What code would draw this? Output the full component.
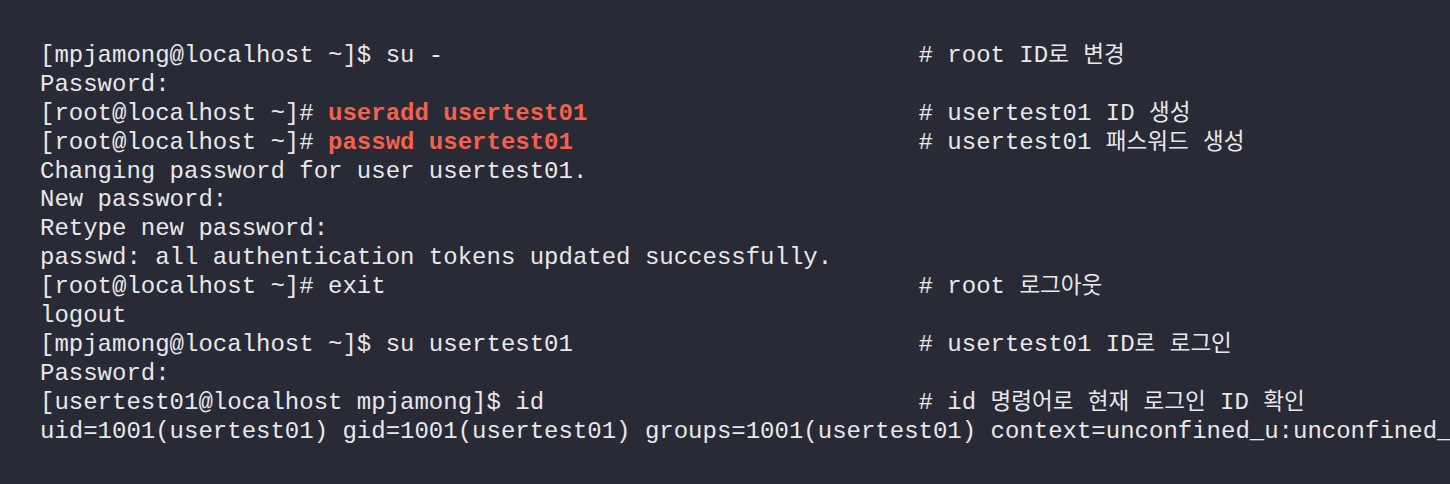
const lines: { text: string; cmd?: string; comment?: string }[] = [
  { text: "[mpjamong@localhost ~]$ su -", comment: "# root ID로 변경" },
  { text: "Password:" },
  { text: "[root@localhost ~]# ", cmd: "useradd usertest01", comment: "# usertest01 ID 생성" },
  { text: "[root@localhost ~]# ", cmd: "passwd usertest01", comment: "# usertest01 패스워드 생성" },
  { text: "Changing password for user usertest01." },
  { text: "New password:" },
  { text: "Retype new password:" },
  { text: "passwd: all authentication tokens updated successfully." },
  { text: "[root@localhost ~]# exit", comment: "# root 로그아웃" },
  { text: "logout" },
  { text: "[mpjamong@localhost ~]$ su usertest01", comment: "# usertest01 ID로 로그인" },
  { text: "Password:" },
  { text: "[usertest01@localhost mpjamong]$ id", comment: "# id 명령어로 현재 로그인 ID 확인" },
  {
    text: "uid=1001(usertest01) gid=1001(usertest01) groups=1001(usertest01) context=unconfined_u:unconfined_r:unconfined_t:s0-s0:c0.c1023",
  },
];

const COL = 61;

// hangul runs get a slightly smaller size so they sit narrower, like the original
function Comment({ text }: { text: string }) {
  const parts = text.split(/([\uAC00-\uD7A3]+)/);
  return (
    <span>
      {parts.map((p, i) =>
        /[\uAC00-\uD7A3]/.test(p) ? (
          <span key={i} className="text-[22.5px]">
            {p}
          </span>
        ) : (
          p
        )
      )}
    </span>
  );
}

export default function App() {
  return (
    <div className="w-[1450px] h-[484px] bg-[#282a36] overflow-hidden">
      <pre className="pt-[42px] pl-[40px] text-[24px] leading-[28.9px] text-[#e8e8ea] font-['Liberation_Mono','Noto_Sans_CJK_KR',monospace] whitespace-pre">
        {lines.map((l, i) => {
          const len = l.text.length + (l.cmd ? l.cmd.length : 0);
          const pad = l.comment ? " ".repeat(Math.max(1, COL - len)) : "";
          return (
            <div key={i} className="h-[28.9px]">
              {l.text}
              {l.cmd && <span className="text-[#f5614a] font-bold">{l.cmd}</span>}
              {pad}
              {l.comment && <Comment text={l.comment} />}
            </div>
          );
        })}
      </pre>
    </div>
  );
}
